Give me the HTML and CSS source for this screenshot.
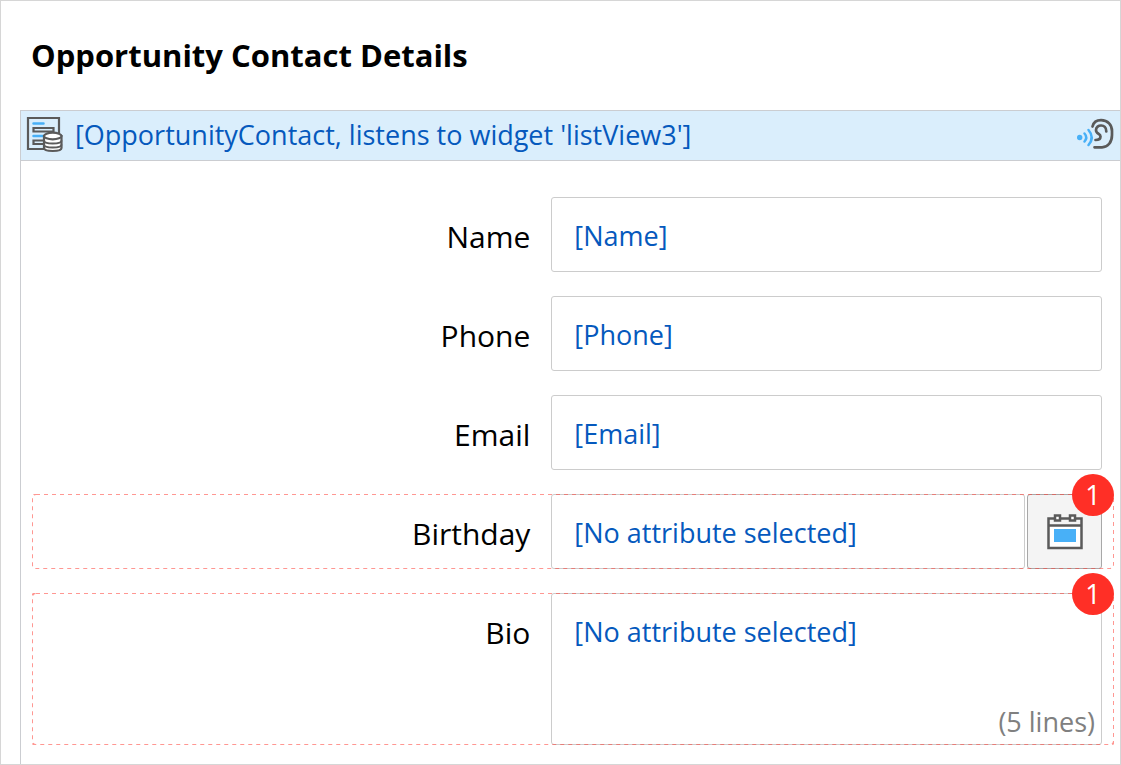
FILE: index.html
```
<!DOCTYPE html>
<html lang="en">
<head>
<meta charset="utf-8">
<meta name="viewport" content="width=device-width, initial-scale=1">
<title>Opportunity Contact Details</title>
<link rel="stylesheet" href="styles.css">
</head>
<body>
<main class="page">
  <h1 class="title">Opportunity Contact Details</h1>
  <section class="data-view">
    <header class="source">
      <svg class="source-icon" width="38" height="38" viewBox="0 0 38 38" fill="none" aria-hidden="true">
        <path d="M33 18V2H2v31h17" stroke="#5a5a5a" stroke-width="2.200"/>
        <path d="M7.500 7.500h10M7.500 20h9" stroke="#48b0f7" stroke-width="2.500" stroke-linecap="round"/>
        <path d="M7.500 12h20v3.500h-20zM18 24.500H7.500v3.500H18" stroke="#5a5a5a" stroke-width="2.200"/>
        <path d="M18 20v12c0 4 17.500 4 17.500 0V20z" fill="#fff" stroke="#5a5a5a" stroke-width="2.200"/>
        <path d="M18 24.500c0 4 17.500 4 17.500 0M18 28.500c0 4 17.500 4 17.500 0" stroke="#5a5a5a" stroke-width="2"/>
        <ellipse cx="26.750" cy="20" rx="8.750" ry="3.300" fill="#fff" stroke="#5a5a5a" stroke-width="2.200"/>
      </svg>
      <span class="source-text">[OpportunityContact, listens to widget 'listView3']</span>
      <svg class="listen-icon" width="38" height="33" viewBox="0 0 38 33" fill="none" stroke-linecap="round" aria-hidden="true">
        <circle cx="3.700" cy="19.500" r="2.700" fill="#48b0f7"/>
        <path d="M8.500 15.500q3.500 4 0 8M12.500 12q6.500 7.500 0 15" stroke="#48b0f7" stroke-width="2.500"/>
        <path d="M16.500 8.500C17.500 4.500 20 2.200 25 2.200C32 2.200 36 7 36 13V17C36 24 32 29.300 26 29.300H18.500" stroke="#5a5a5a" stroke-width="2.700"/>
        <path d="M30.300 13.500C30.500 5.500 20 6 20 12C20 16.500 24.500 15 24.500 18.500C24.500 21 22.500 22 19.500 22" stroke="#5a5a5a" stroke-width="2.700"/>
      </svg>
    </header>
    <form class="fields">
      <div class="row">
        <label class="label" for="name">Name</label>
        <div class="control"><input class="box" id="name" type="text" value="[Name]"></div>
      </div>
      <div class="row">
        <label class="label" for="phone">Phone</label>
        <div class="control"><input class="box" id="phone" type="text" value="[Phone]"></div>
      </div>
      <div class="row">
        <label class="label" for="email">Email</label>
        <div class="control"><input class="box" id="email" type="text" value="[Email]"></div>
      </div>
      <div class="row">
        <label class="label" for="birthday">Birthday</label>
        <div class="control">
          <input class="box" id="birthday" type="text" value="[No attribute selected]">
          <button class="pick" type="button" aria-label="Pick a date">
            <svg class="pick-icon" width="36" height="36" viewBox="0 0 36 36" fill="none" aria-hidden="true">
              <path d="M1.500 4.500h33v29.500h-33z" fill="#fff"/>
              <path d="M2 5h32v6H2z" fill="#f4f4f4"/>
              <path d="M1.500 4.500h33v29.500h-33zM1.500 11.500h33" stroke="#5a5a5a" stroke-width="2.500"/>
              <path d="M8 1.500h5v5H8zM23 1.500h5v5h-5z" fill="#fff" stroke="#5a5a5a" stroke-width="2.500"/>
              <path d="M7 15h22v13H7z" fill="#48b0f7"/>
            </svg>
          </button>
        </div>
        <svg class="outline" aria-hidden="true"><rect width="100%" height="100%" rx="4"/></svg>
        <span class="badge">1</span>
      </div>
      <div class="row">
        <label class="label" for="bio">Bio</label>
        <div class="control">
          <textarea class="box area" id="bio">[No attribute selected]</textarea>
          <span class="hint">(5 lines)</span>
        </div>
        <svg class="outline" aria-hidden="true"><rect width="100%" height="100%" rx="4"/></svg>
        <span class="badge">1</span>
      </div>
    </form>
  </section>
</main>
</body>
</html>
```
FILE: styles.css
```
* {
  box-sizing: border-box;
}

body {
  margin: 0;
  background: #fff;
  color: #000;
  font-family: "Open Sans", "Noto Sans", sans-serif;
}

.page {
  display: flex;
  flex-direction: column;
  min-height: 100vh;
  border: 1px solid #d6d6d6;
}

.title {
  margin: 0;
  padding: 32px 30px 33px;
  font-size: 31px;
  line-height: 44px;
  font-weight: 700;
}

.data-view {
  flex: 1;
  margin-left: 19px;
  border: solid #cbcdd1;
  border-width: 1px 0 0 1px;
}

.source {
  display: flex;
  align-items: center;
  height: 50px;
  padding: 0 6px 2px 5px;
  gap: 11px;
  background: #daeefc;
  border-bottom: 1px solid #cbcdd1;
  color: #0559bd;
  font-size: 27px;
}

.source-icon,
.listen-icon {
  flex: none;
}

.source-text {
  flex: 1;
}

.fields {
  display: flex;
  flex-direction: column;
  gap: 24px;
  padding: 36px 6px 19px 11px;
}

.row {
  position: relative;
  display: grid;
  grid-template-columns: 48% 1fr;
}

.label {
  padding: 18px 21px 0 0;
  text-align: right;
  font-size: 30px;
  line-height: 44px;
}

.control {
  position: relative;
  display: flex;
  gap: 2px;
  padding-right: 12px;
}

.box {
  display: block;
  flex: 1;
  min-width: 0;
  height: 75px;
  margin: 0;
  padding: 2px 22px 0;
  border: 1px solid #ccc;
  border-radius: 3px;
  background: #fff;
  color: #0559bd;
  font-family: inherit;
  font-size: 27px;
  line-height: 36px;
}

.area {
  height: 152px;
  padding: 20px 22px;
  resize: none;
}

.pick {
  display: flex;
  align-items: center;
  justify-content: center;
  flex: none;
  width: 75px;
  height: 75px;
  padding: 0;
  border: 1px solid #a8a8a8;
  border-radius: 3px;
  background: #f4f4f4;
}

.hint {
  position: absolute;
  right: 19px;
  bottom: 5px;
  color: #808080;
  font-size: 27px;
  line-height: 36px;
}

.outline {
  position: absolute;
  inset: 0;
  width: 100%;
  height: 100%;
  pointer-events: none;
}

.outline rect {
  fill: none;
  stroke: #ff2f26;
  stroke-opacity: 0.5;
  stroke-width: 2;
  stroke-dasharray: 4 4;
}

.badge {
  position: absolute;
  top: -20px;
  right: 0;
  width: 42px;
  height: 42px;
  border-radius: 50%;
  background: #ff2f26;
  color: #fff;
  font-size: 27px;
  line-height: 42px;
  text-align: center;
}
```
